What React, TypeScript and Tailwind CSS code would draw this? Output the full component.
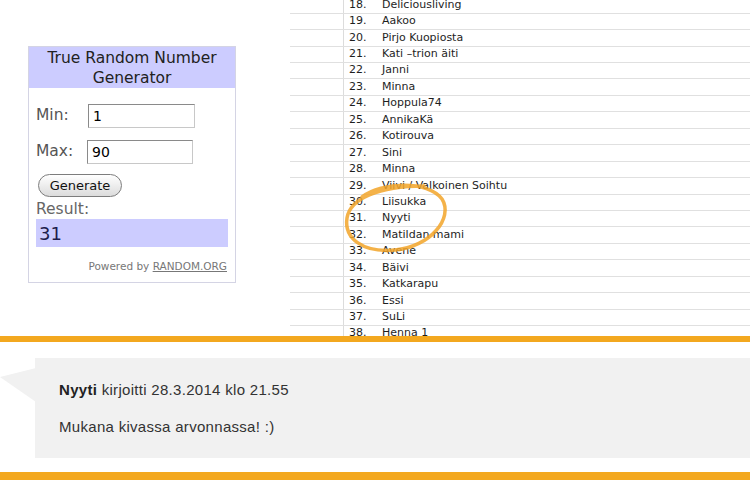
import React from "react";

const names: [number, string][] = [
  [18, "Deliciousliving"],
  [19, "Aakoo"],
  [20, "Pirjo Kuopiosta"],
  [21, "Kati –trion äiti"],
  [22, "Janni"],
  [23, "Minna"],
  [24, "Hoppula74"],
  [25, "AnnikaKä"],
  [26, "Kotirouva"],
  [27, "Sini"],
  [28, "Minna"],
  [29, "Viivi / Valkoinen Soihtu"],
  [30, "Liisukka"],
  [31, "Nyyti"],
  [32, "Matildan mami"],
  [33, "Avene"],
  [34, "Bäivi"],
  [35, "Katkarapu"],
  [36, "Essi"],
  [37, "SuLi"],
  [38, "Henna 1"],
];

function Widget() {
  return (
    <div className="ml-[28px] mt-[46px] w-[208px] h-[237px] border border-[#d4d4e4] bg-white flex flex-col font-['DejaVu_Sans',sans-serif]">
      <div className="h-[41px] bg-[#ccccff] text-[15.5px] leading-[20px] text-[#222] text-center pt-[1px]">
        True Random Number
        <br />
        Generator
      </div>
      <div className="pl-[7px] pr-[7px] flex flex-col">
        <div className="flex items-center mt-[16px] h-[24px]">
          <span className="w-[52px] text-[15.5px] text-[#555]">Min:</span>
          <div className="w-[107px] h-[24px] border border-t-[#8a8a8a] border-l-[#8a8a8a] border-r-[#c8c8c8] border-b-[#c8c8c8] flex items-center pl-[4px] text-[14px] text-black">
            1
          </div>
        </div>
        <div className="flex items-center mt-[12px] h-[24px]">
          <span className="w-[51px] text-[15.5px] text-[#555]">Max:</span>
          <div className="w-[106px] h-[24px] border border-t-[#8a8a8a] border-l-[#8a8a8a] border-r-[#c8c8c8] border-b-[#c8c8c8] flex items-center pl-[4px] text-[14px] text-black">
            90
          </div>
        </div>
        <div className="mt-[10px] ml-[2px] w-[84px] h-[23px] rounded-full border border-[#7d7d7d] bg-gradient-to-b from-white to-[#dcdcdc] flex items-center justify-center text-[13px] text-[#111]">
          Generate
        </div>
        <div className="mt-[2px] text-[15.5px] leading-[20px] text-[#666]">Result:</div>
        <div className="mt-[0px] w-[192px] h-[28px] bg-[#ccccff] flex items-center pl-[3px] text-[18px] text-[#1c1c4c]">
          31
        </div>
        <div className="mt-[12px] text-right pr-[1px] text-[10.5px] text-[#777]">
          Powered by <span className="underline">RANDOM.ORG</span>
        </div>
      </div>
    </div>
  );
}

function List() {
  return (
    <div className="flex-1 h-[336px] overflow-hidden font-['DejaVu_Sans',sans-serif] text-[11px] text-[#1e1e1e]">
      <div className="-mt-[2.75px]">
        {names.map(([n, name]) => (
          <div key={n} className="flex h-[16.45px] border-b border-[#e0e0e0] items-center">
            <div className="w-[54px] h-full border-r border-[#dcdcdc]" />
            <div className="w-[38px] pl-[5px]">{n}.</div>
            <div>{name}</div>
          </div>
        ))}
      </div>
    </div>
  );
}

export default function App() {
  return (
    <div className="relative w-[750px] h-[480px] bg-white overflow-hidden">
      <div className="flex h-[336px]">
        <div className="w-[290px] h-full">
          <Widget />
        </div>
        <List />
      </div>
      <div className="h-[6px] bg-[#f3a81f]" />
      <div className="relative h-[130px] pt-[16px]">
        <div className="absolute left-0 top-0 w-[40px] h-[130px]">
          <svg width="40" height="130" viewBox="0 0 40 130">
            <polygon points="0,35 36,26 36,60" fill="#f1f1f1" />
          </svg>
        </div>
        <div className="ml-[35px] h-[100px] bg-[#f1f1f1] pl-[24px] pt-[22px] font-['Liberation_Sans',sans-serif] text-[15px] tracking-[0.3px] text-[#333]">
          <div className="leading-[20px]">
            <span className="font-bold text-[#222]">Nyyti</span> kirjoitti 28.3.2014 klo 21.55
          </div>
          <div className="leading-[20px] mt-[17px]">Mukana kivassa arvonnassa! :)</div>
        </div>
      </div>
      <div className="h-[8px] bg-[#f3a81f]" />
      <svg
        className="absolute left-0 top-0 pointer-events-none"
        width="750"
        height="480"
        viewBox="0 0 750 480"
      >
        <path
          d="M 362 197 C 382 182, 428 180, 442 199 C 454 218, 430 247, 395 250 C 362 253, 344 238, 347 218 C 350 199, 378 186, 424 186"
          fill="none"
          stroke="#f2a529"
          strokeOpacity="0.85"
          strokeWidth="3.5"
          strokeLinecap="round"
        />
      </svg>
    </div>
  );
}
